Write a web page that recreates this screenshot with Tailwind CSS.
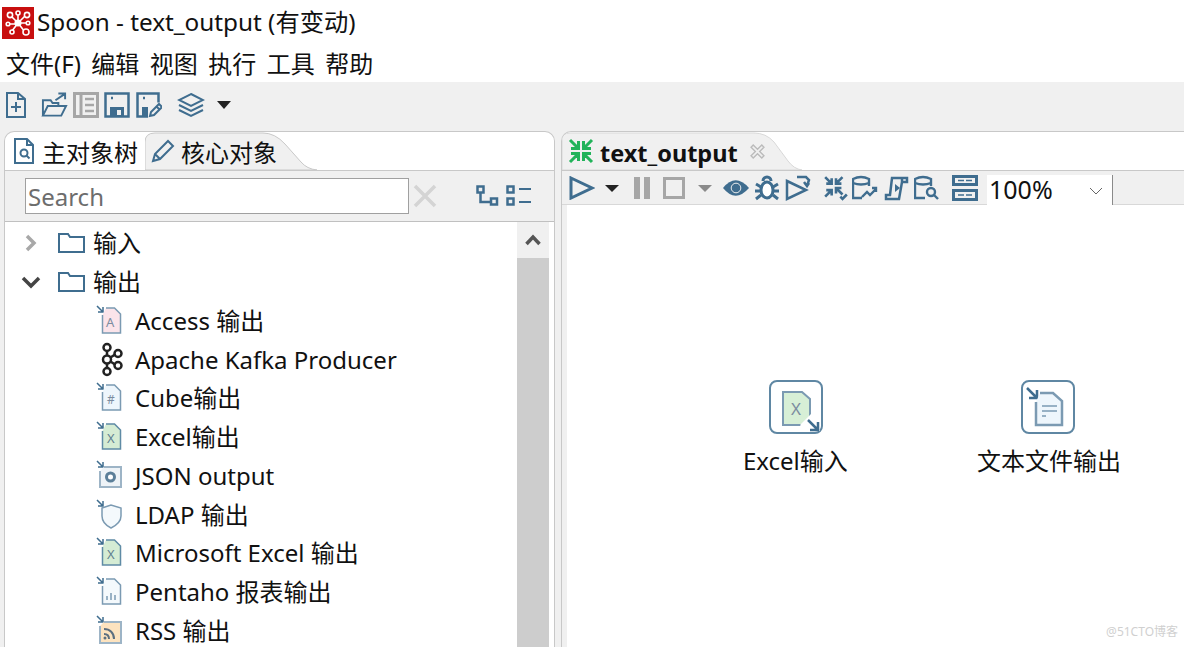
<!DOCTYPE html>
<html lang="en">
<head>
    <meta charset="UTF-8">
    <title>Spoon</title>
    <script src="https://cdn.jsdelivr.net/npm/@tailwindcss/browser@4"></script>
</head>
<body class="h-[647px] w-[1184px] overflow-hidden bg-white font-['Noto_Sans','Noto_Sans_CJK_SC',sans-serif] text-[#111]">
    <!-- Title -->
    <div class="flex h-[45px] items-center pl-[2px]">
        <svg class="h-[32px] w-[32px]" viewBox="0 0 32 32">
            <rect width="32" height="32" fill="#c80f0f"/>
            <g stroke="#fff" stroke-width="1.6" fill="none">
                <path d="M9 9l7 7M24 8l-8 8M7 17h9M16 16l7 9M16 16l-6 8M16 7v9M25 16h-9"/>
                <circle cx="8" cy="8" r="2.6" fill="#c80f0f"/><circle cx="16" cy="6" r="2" fill="#c80f0f"/><circle cx="25" cy="8" r="2.6" fill="#c80f0f"/>
                <circle cx="6" cy="17" r="1.8" fill="#c80f0f"/><circle cx="16" cy="16" r="2.8" fill="#fff"/><circle cx="26" cy="16" r="1.8" fill="#c80f0f"/>
                <circle cx="10" cy="25" r="2" fill="#c80f0f"/><circle cx="24" cy="25" r="3" fill="#c80f0f"/>
            </g>
        </svg>
        <span class="ml-[3px] text-[24.3px] leading-none">Spoon - text_output (有变动)</span>
    </div>
    <!-- Menu -->
    <div class="flex h-[37px] items-center gap-[10.5px] pl-[6px] text-[24px]">
        <span>文件(F)</span><span>编辑</span><span>视图</span><span>执行</span><span>工具</span><span>帮助</span>
    </div>
    <!-- Main toolbar -->
    <div class="flex h-[49px] items-center bg-[#f0f0f0] pb-[3px] pl-[6px] text-[#3f6d8f]">
        <svg class="h-[26px] w-[20px]" viewBox="0 0 20 26" fill="none" stroke="currentColor" stroke-width="2"><path d="M1 1h11l7 6v18H1zM12 1v6h7M5 15h10M10 10v10"/></svg>
        <svg class="ml-[15px] h-[26px] w-[27px]" viewBox="0 0 28 26" fill="none" stroke="currentColor" stroke-width="2"><path d="M2 24V8h8l2 3h6v3M2 24l5-10h19l-5 10zM15 8l9-6M18 1h7v6"/></svg>
        <svg class="ml-[5px] h-[26px] w-[26px]" viewBox="0 0 26 26" fill="none" stroke="#a6a6a6" stroke-width="3"><path d="M1.5 1.500h23v23h-23zM8 2v22"/><path stroke-width="2.500" d="M12 7h9M12 13h9M12 19h9"/></svg>
        <svg class="ml-[5px] h-[26px] w-[26px]" viewBox="0 0 26 26" fill="none" stroke="currentColor" stroke-width="2.500"><path d="M1.500 1.500h23v23h-23z"/><path d="M6 15h14v9H6z" fill="currentColor" stroke="none"/><path d="M7 6h2"/><rect x="13" y="18" width="4" height="5" fill="#f0f0f0" stroke="none"/></svg>
        <svg class="ml-[6px] h-[26px] w-[26px]" viewBox="0 0 26 26" fill="none" stroke="currentColor" stroke-width="2.500"><path d="M12 24.500H1.500v-23h21v9"/><path d="M6 15h6v9H6z" fill="currentColor" stroke="none"/><path d="M7 6h2"/><path d="M14 24l1-4 8-8 3 3-8 8zM20.500 14.500l3 3" stroke-width="2"/></svg>
        <svg class="ml-[15px] h-[26px] w-[28px]" viewBox="0 0 28 26" fill="none" stroke="currentColor" stroke-width="2"><path d="M14 2l12 6-12 6L2 8zM2 13l12 6 12-6M2 18l12 6 12-6"/></svg>
        <svg class="ml-[12px] h-[8px] w-[14px]" viewBox="0 0 14 8"><path d="M0 0h14L7 8z" fill="#222"/></svg>
    </div>
    <!-- Panes -->
    <div class="flex h-[516px] bg-[#f0f0f0] pl-[4px]">
        <!-- Left pane -->
        <div class="flex w-[551px] flex-col overflow-hidden rounded-t-[10px] border border-b-0 border-[#c8c8c8] bg-white">
            <div class="relative flex h-[39px] shrink-0 border-b border-[#c8c8c8]">
                <div class="ml-[1px] flex h-[38px] w-[139px] items-center rounded-tl-[8px] pl-[8px] text-[24px]">
                    <svg class="h-[26px] w-[20px]" viewBox="0 0 20 26" fill="none" stroke="#3f6d8f" stroke-width="2"><path d="M1 1h12l6 6v18H1zM13 1v6h6"/><circle cx="10" cy="15" r="3.500"/><path d="M12.500 17.500l3 3"/></svg>
                    <span class="ml-[8px] mt-[3px]">主对象树</span>
                </div>
                <div class="relative flex h-[38px] w-[172px] items-center pl-[6px] text-[24px]">
                    <svg class="absolute inset-0 h-[38px] w-[172px]" viewBox="0 0 172 38"><path d="M0 38V10Q0 1 10 1H118Q130 1 140 12L156 30Q162 37 172 38Z" fill="#f0f0f0" stroke="#c8c8c8"/></svg>
                    <svg class="relative h-[24px] w-[24px]" viewBox="0 0 24 24" fill="none" stroke="#3f6d8f" stroke-width="2"><path d="M2 22l2-7L17 2l5 5L9 20zM4 15l5 5"/></svg>
                    <span class="relative ml-[6px] mt-[3px]">核心对象</span>
                </div>
            </div>
            <div class="flex h-[51px] shrink-0 items-center border-b border-[#c0c0c0] bg-[#f0f0f0] pl-[20px]">
                <div class="flex h-[36px] w-[384px] items-center border border-[#a0a0a0] bg-white pl-[2px] text-[24px] text-[#6d6d6d]"><span class="mt-[2px]">Search</span></div>
                <svg class="ml-[4px] h-[24px] w-[24px]" viewBox="0 0 24 24" stroke="#d4d4d4" stroke-width="3.500"><path d="M2 2l20 20M22 2L2 22"/></svg>
                <svg class="ml-[39px] h-[22px] w-[23px]" viewBox="0 0 23 22" fill="none" stroke="#3f6d8f" stroke-width="2.500"><path d="M1.500 1.500h6v6h-6zM15 13.500h6v6h-6zM4.500 8v9H15"/></svg>
                <svg class="ml-[7px] h-[22px] w-[26px]" viewBox="0 0 26 22" fill="none" stroke="#3f6d8f" stroke-width="2.500"><path d="M1.500 1.500h6v6h-6zM1.500 13.500h6v6h-6z"/><path stroke-width="2" d="M13 4h12M13 17h12"/></svg>
            </div>
            <div class="flex min-h-0 flex-1">
                <div class="flex-1 pl-[16px] pt-[2px] text-[24px]">
                    <div class="flex h-[38.750px] items-center">
                        <svg class="h-[20px] w-[20px]" viewBox="0 0 20 20" fill="none" stroke="#a8a8a8" stroke-width="3.500"><path d="M6 3l7 7-7 7"/></svg>
                        <svg class="ml-[17px] h-[20px] w-[27px]" viewBox="0 0 27 20" fill="none" stroke="#3f6d8f" stroke-width="2"><path d="M1 1h9l2 3h14v15H1z"/></svg>
                        <span class="ml-[8px]">输入</span>
                    </div>
                    <div class="flex h-[38.750px] items-center">
                        <svg class="h-[20px] w-[20px]" viewBox="0 0 20 20" fill="none" stroke="#444" stroke-width="3.500"><path d="M2 6l8 8 8-8"/></svg>
                        <svg class="ml-[17px] h-[20px] w-[27px]" viewBox="0 0 27 20" fill="none" stroke="#3f6d8f" stroke-width="2"><path d="M1 1h9l2 3h14v15H1z"/></svg>
                        <span class="ml-[8px]">输出</span>
                    </div>
                    <div class="flex h-[38.750px] items-center pl-[74px]">
                        <svg class="h-[32px] w-[29px]" viewBox="0 0 29 32" fill="none"><path d="M2 1l6 6M8 2v5H3" stroke="#3f6d8f" stroke-width="1.500"/><path d="M11 3h8.500l6 6v19h-18V10" fill="#fbe4ea" stroke="#7b9ab2" stroke-width="1.500"/><text x="11" y="22" font-size="13" fill="#7b8ca0" stroke="none">A</text></svg>
                        <span class="ml-[11px]">Access 输出</span>
                    </div>
                    <div class="flex h-[38.750px] items-center pl-[74px]">
                        <svg class="h-[35px] w-[29px]" viewBox="0 0 29 34" fill="none" stroke="#222" stroke-width="2.500"><circle cx="12" cy="5" r="3.500"/><circle cx="12" cy="17" r="4"/><circle cx="12" cy="29" r="3.500"/><circle cx="23" cy="11" r="3.500"/><circle cx="23" cy="23" r="3.500"/><path d="M12 9v4M12 21v4M15.500 15l4.500-3M15.500 19l4.500 3"/></svg>
                        <span class="ml-[11px]">Apache Kafka Producer</span>
                    </div>
                    <div class="flex h-[38.750px] items-center pl-[74px]">
                        <svg class="h-[32px] w-[29px]" viewBox="0 0 29 32" fill="none"><path d="M2 1l6 6M8 2v5H3" stroke="#3f6d8f" stroke-width="1.500"/><path d="M11 3h8.500l6 6v19h-18V10" fill="#eef6fc" stroke="#7b9ab2" stroke-width="1.500"/><text x="12" y="22" font-size="12" fill="#7b8ca0" stroke="none">#</text></svg>
                        <span class="ml-[11px]">Cube输出</span>
                    </div>
                    <div class="flex h-[38.750px] items-center pl-[74px]">
                        <svg class="h-[32px] w-[29px]" viewBox="0 0 29 32" fill="none"><path d="M2 1l6 6M8 2v5H3" stroke="#3f6d8f" stroke-width="1.500"/><path d="M11 3h8.500l6 6v19h-18V10" fill="#d5ecd4" stroke="#5f8ba5" stroke-width="1.500"/><text x="12" y="22" font-size="13" fill="#5f7f8f" stroke="none">X</text></svg>
                        <span class="ml-[11px]">Excel输出</span>
                    </div>
                    <div class="flex h-[38.750px] items-center pl-[74px]">
                        <svg class="h-[32px] w-[29px]" viewBox="0 0 29 32" fill="none"><path d="M2 1l6 6M8 2v5H3" stroke="#3f6d8f" stroke-width="1.500"/><path d="M9 7h17v20H5V11" fill="#eef3f7" stroke="#9db4c6" stroke-width="2"/><circle cx="15.500" cy="17" r="4" fill="#fff" stroke="#5c7f99" stroke-width="3"/></svg>
                        <span class="ml-[11px]">JSON output</span>
                    </div>
                    <div class="flex h-[38.750px] items-center pl-[74px]">
                        <svg class="h-[32px] w-[29px]" viewBox="0 0 29 32" fill="none"><path d="M2 1l6 6M8 2v5H3" stroke="#3f6d8f" stroke-width="1.500"/><path d="M7 9l9-3 10 3v8c0 6-4 9-10 12-6-3-9-6-9-12z" fill="#f4f9fc" stroke="#7b9ab2" stroke-width="1.500"/></svg>
                        <span class="ml-[11px]">LDAP 输出</span>
                    </div>
                    <div class="flex h-[38.750px] items-center pl-[74px]">
                        <svg class="h-[32px] w-[29px]" viewBox="0 0 29 32" fill="none"><path d="M2 1l6 6M8 2v5H3" stroke="#3f6d8f" stroke-width="1.500"/><path d="M11 3h8.500l6 6v19h-18V10" fill="#d5ecd4" stroke="#5f8ba5" stroke-width="1.500"/><text x="12" y="22" font-size="13" fill="#5f7f8f" stroke="none">X</text></svg>
                        <span class="ml-[11px]">Microsoft Excel 输出</span>
                    </div>
                    <div class="flex h-[38.750px] items-center pl-[74px]">
                        <svg class="h-[32px] w-[29px]" viewBox="0 0 29 32" fill="none"><path d="M2 1l6 6M8 2v5H3" stroke="#3f6d8f" stroke-width="1.500"/><path d="M11 3h8.500l6 6v19h-18V10" fill="#f4f9fc" stroke="#7b9ab2" stroke-width="1.500"/><path d="M12 24v-4M16 24v-7M20 24v-5" stroke="#7b9ab2" stroke-width="1.500"/></svg>
                        <span class="ml-[11px]">Pentaho 报表输出</span>
                    </div>
                    <div class="flex h-[38.750px] items-center pl-[74px]">
                        <svg class="h-[32px] w-[29px]" viewBox="0 0 29 32" fill="none"><path d="M2 1l6 6M8 2v5H3" stroke="#3f6d8f" stroke-width="1.500"/><path d="M9 7h17v21H5V11" fill="#fde3bf" stroke="#9db4c6" stroke-width="2"/><path d="M9 14c6 0 10 4 10 10M9 19c3 0 5 2 5 5" stroke="#5c6f80" stroke-width="2"/><circle cx="10" cy="23" r="1.500" fill="#5c6f80"/></svg>
                        <span class="ml-[11px]">RSS 输出</span>
                    </div>
                </div>
                <div class="mr-[5px] flex w-[32px] shrink-0 flex-col bg-[#cdcdcd]">
                    <div class="flex h-[36px] items-center justify-center bg-[#f0f0f0]">
                        <svg class="h-[12px] w-[16px]" viewBox="0 0 16 12" fill="none" stroke="#555" stroke-width="3.500"><path d="M1.500 10L8 3l6.500 7"/></svg>
                    </div>
                </div>
            </div>
        </div>
        <!-- Right pane -->
        <div class="ml-[6px] flex flex-1 flex-col overflow-hidden rounded-tl-[10px] border border-b-0 border-r-0 border-[#c8c8c8] bg-white">
            <div class="relative flex h-[39px] shrink-0 items-center border-b border-[#c8c8c8] pl-[6px]">
                <svg class="absolute left-0 top-0 h-[38px] w-[240px]" viewBox="0 0 240 38"><path d="M0 38V8Q0 1 8 1H192Q204 1 212 10L226 29Q232 37 240 38Z" fill="#f0f0f0" stroke="#d8d8d8"/></svg>
                <svg class="relative h-[26px] w-[26px]" viewBox="0 0 26 26" fill="none" stroke="#22b35a" stroke-width="3"><path d="M2 2l7 7M10.500 3v7.500H3M24 2l-7 7M15.500 3v7.500H23M2 24l7-7M10.500 23v-7.500H3M24 24l-7-7M15.500 23v-7.500H23"/></svg>
                <span class="relative ml-[6px] mt-[5px] text-[23.500px] font-bold">text_output</span>
                <svg class="relative ml-[12px] h-[15px] w-[15px]" viewBox="0 0 14 14" fill="none" stroke="#bbb" stroke-width="1.300"><path d="M3 1l4 4 4-4 2 2-4 4 4 4-2 2-4-4-4 4-2-2 4-4-4-4z"/></svg>
            </div>
            <div class="flex h-[34px] shrink-0 items-center border-b border-[#d8d8d8] bg-[#f0f0f0] pl-[7px] pt-[1px] text-[#3f6d8f]">
                <svg class="h-[24px] w-[26px]" viewBox="0 0 26 24" fill="none" stroke="currentColor" stroke-width="3"><path d="M2 2l21 10L2 22z"/></svg>
                <svg class="ml-[10px] h-[7px] w-[14px]" viewBox="0 0 14 7"><path d="M0 0h14L7 7z" fill="#222"/></svg>
                <svg class="ml-[15px] h-[22px] w-[17px]" viewBox="0 0 17 22"><path d="M0 0h6v22H0zM10 0h6v22h-6z" fill="#a6a6a6"/></svg>
                <svg class="ml-[12px] h-[22px] w-[22px]" viewBox="0 0 22 22" fill="none" stroke="#a6a6a6" stroke-width="3"><path d="M1.500 1.500h19v19h-19z"/></svg>
                <svg class="ml-[13px] h-[7px] w-[14px]" viewBox="0 0 14 7"><path d="M0 0h14L7 7z" fill="#8a8a8a"/></svg>
                <svg class="ml-[11px] h-[20px] w-[26px]" viewBox="0 0 27 20"><path d="M0 10Q13-6 27 10 13 26 0 10z" fill="#3f6d8f"/><circle cx="13.500" cy="10" r="5" fill="#3f6d8f" stroke="#f0f0f0" stroke-width="1"/></svg>
                <svg class="ml-[5px] h-[26px] w-[26px]" viewBox="0 0 24 26" fill="none" stroke="currentColor" stroke-width="3"><ellipse cx="12" cy="15" rx="6" ry="8" fill="#fff"/><path d="M8 6a4 4 0 018 0M1 9l5 3M23 9l-5 3M0 16h6M24 16h-6M1 24l5-4M23 24l-5-4"/></svg>
                <svg class="ml-[5px] h-[26px] w-[26px]" viewBox="0 0 26 26" fill="none" stroke="currentColor" stroke-width="2.500"><path d="M2 6l19 9L2 24zM12 2h9l3 3-2 6M19 7l3 4 2-3"/></svg>
                <svg class="ml-[12px] h-[26px] w-[26px]" viewBox="0 0 24 24" fill="none" stroke="currentColor" stroke-width="2.400"><path d="M2 2l6 6M8 3v5H3M18 2l-6 6M12 3v5h5M2 20l6-6M8 19v-5H3M18 18l-6-6M12 17v-5h5M16 20l2 2 4-4"/></svg>
                <svg class="ml-[3px] h-[26px] w-[26px]" viewBox="0 0 26 24" fill="none" stroke="currentColor" stroke-width="2.400"><path d="M10 22H1V3q8-4 16 0v7M1 7q8 3 16 0M10 21l5-5 3 3 6-6M20 12h4v4"/></svg>
                <svg class="ml-[6px] h-[26px] w-[26px]" viewBox="0 0 26 24" fill="none" stroke="currentColor" stroke-width="2.500"><path d="M8 2h15v4h-5l-3 17H2v-4h4zM18 2v4"/><path d="M11 8l5 4-5 4z" fill="currentColor" stroke="none"/></svg>
                <svg class="ml-[4px] h-[26px] w-[26px]" viewBox="0 0 26 24" fill="none" stroke="currentColor" stroke-width="2.400"><path d="M11 22H1V3q8-4 16 0v7M1 7q8 3 16 0"/><circle cx="17" cy="16" r="4"/><path d="M20 19l4 4"/></svg>
                <svg class="ml-[12px] h-[26px] w-[26px]" viewBox="0 0 26 26"><path d="M0 0h26v11H0zM0 14h26v12H0z" fill="currentColor"/><path d="M3 3h20v5H3zM3 17h20v6H3z" fill="#f0f0f0"/><path d="M6 5.500h6M14 5.500h6M6 20h6M14 20h6" stroke="currentColor" stroke-width="1.500"/></svg>
                <div class="relative ml-[9px] mt-[3px] flex h-[30px] w-[126px] items-center border-r border-[#8a8a8a] bg-white pl-[2px] text-[25px] text-[#111]">100%
                    <svg class="absolute right-[9px] top-[12px] h-[8px] w-[14px]" viewBox="0 0 14 8" fill="none" stroke="#666"><path d="M1 1l6 6 6-6"/></svg>
                </div>
            </div>
            <!-- Canvas -->
            <div class="relative flex-1 border-l-[5px] border-[#f0f0f0] bg-white text-[24px]">
                <div class="absolute left-[202px] top-[175px] flex h-[54px] w-[54px] items-center justify-center rounded-[8px] border-2 border-[#5f87a3]">
                    <svg class="h-[44px] w-[44px] overflow-visible" viewBox="0 0 44 44" fill="none"><path d="M9 7h19l8 7v26H9z" fill="#d7efd6" stroke="#7b9ab2" stroke-width="2"/><text x="17" y="30" font-size="17" fill="#7b8ca0">X</text><path d="M26 40L38 28 46 46H30z" fill="#fff"/><path d="M34 35l10 10M44 37v8h-8" stroke="#3f6d8f" stroke-width="2.500"/></svg>
                </div>
                <span class="absolute left-[176px] top-[238px]">Excel输入</span>
                <div class="absolute left-[454px] top-[175px] flex h-[54px] w-[54px] items-center justify-center rounded-[8px] border-2 border-[#5f87a3]">
                    <svg class="h-[44px] w-[44px]" viewBox="0 0 44 44" fill="none"><path d="M1 3l10 10M11 5v8H3" stroke="#3f6d8f" stroke-width="2.500"/><path d="M14 8h13l9 8v24H10V17" fill="#eef6fc" stroke="#7b9ab2" stroke-width="2.500"/><path d="M16 21h15M16 26h15M16 31h4" stroke="#7b9ab2" stroke-width="1.500"/></svg>
                </div>
                <span class="absolute left-[410px] top-[238px]">文本文件输出</span>
                <span class="absolute bottom-[6px] right-[6px] text-[12px] text-[#d0d0d0]">@51CTO博客</span>
            </div>
        </div>
    </div>
</body>
</html>
